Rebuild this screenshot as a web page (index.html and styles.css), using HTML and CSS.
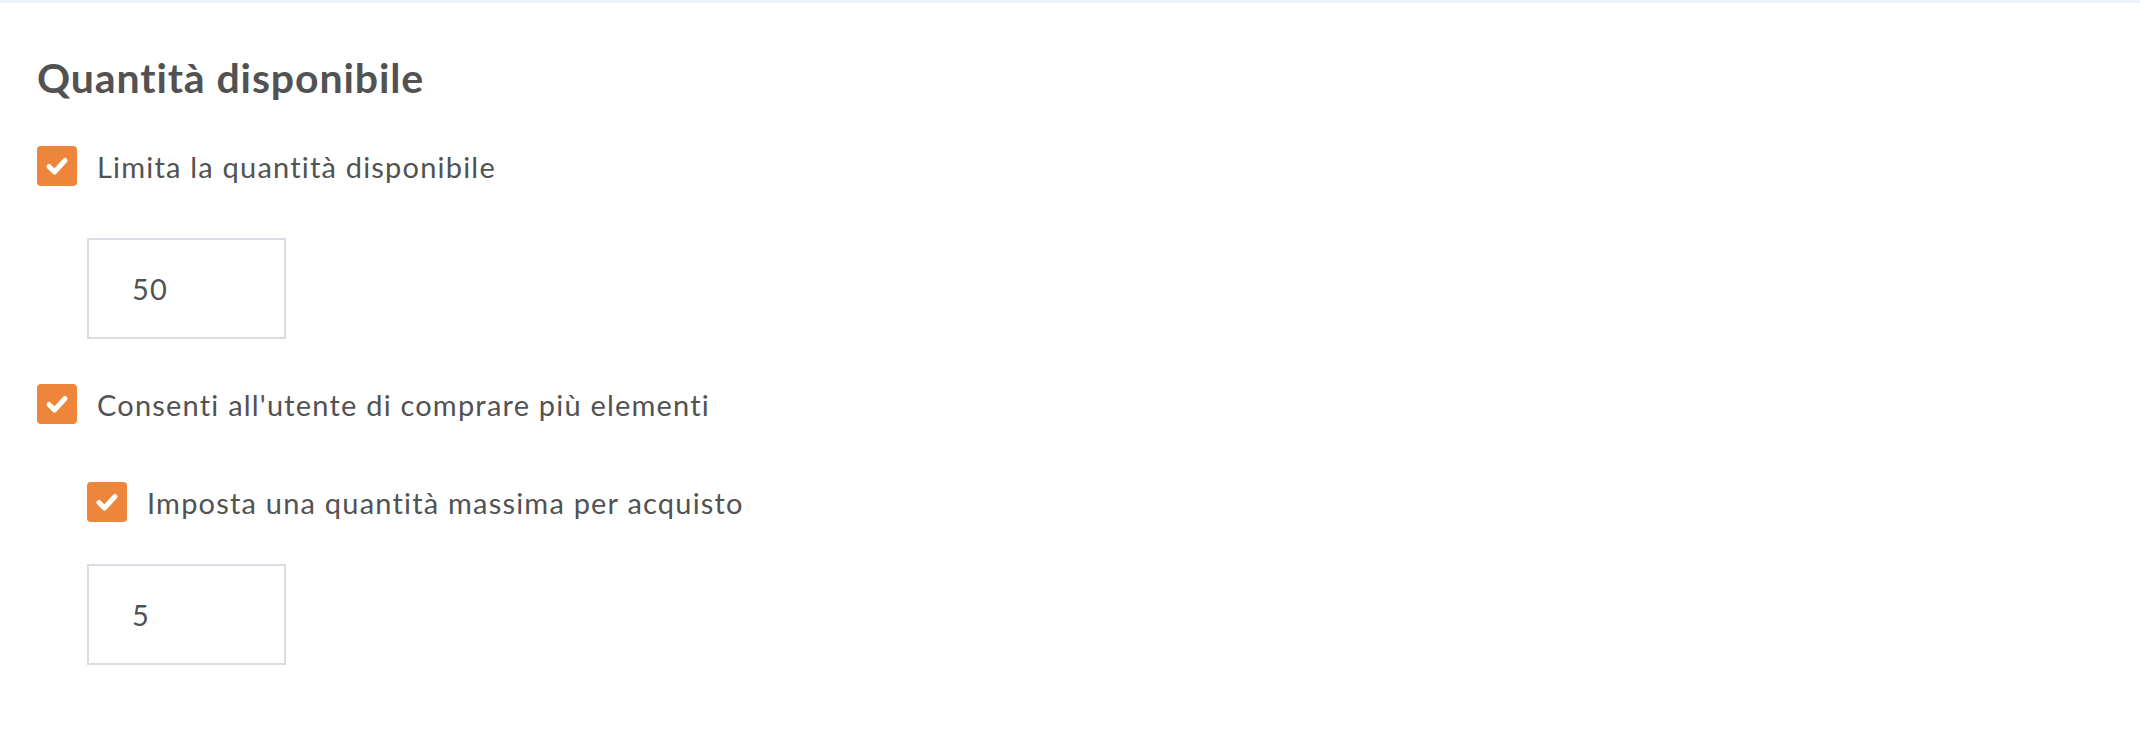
FILE: index.html
```html
<html>
	<head>
		<title>Quantità disponibile</title>
		<link rel="stylesheet" href="styles.css">
	</head>
	<body>
		<div class="topBar"></div>
		<div class="section">
			<h2 class="sectionTitle">Quantità disponibile</h2>

			<label class="checkRow">
				<span class="checkBox"><svg viewBox="0 0 40 40"><polyline points="12,20.5 17.5,26 28,14.5"/></svg></span>
				<span class="checkText">Limita la quantità disponibile</span>
			</label>
			<div class="indent">
				<input type="text" class="qtyInput" value="50">
			</div>

			<label class="checkRow rowSecond">
				<span class="checkBox"><svg viewBox="0 0 40 40"><polyline points="12,20.5 17.5,26 28,14.5"/></svg></span>
				<span class="checkText">Consenti all'utente di comprare più elementi</span>
			</label>
			<div class="indent">
				<label class="checkRow rowNested">
					<span class="checkBox"><svg viewBox="0 0 40 40"><polyline points="12,20.5 17.5,26 28,14.5"/></svg></span>
					<span class="checkText">Imposta una quantità massima per acquisto</span>
				</label>
				<input type="text" class="qtyInput qtySecond" value="5">
			</div>
		</div>
	</body>
</html>
```

FILE: styles.css
```css
body{
	margin:0px;
	background-color:#ffffff;
	font-family:Lato, "Liberation Sans", sans-serif;
	font-variant-ligatures:none;
	color:#505050;
}
.topBar{
	height:3px;
	background-color:#edf1fa;
}
.section{
	padding:0px 37px;
}
.sectionTitle{
	margin:0px;
	padding-top:51px;
	font-size:41px;
	line-height:48px;
	font-weight:700;
	letter-spacing:0.9px;
	color:#525252;
}
.checkRow{
	display:flex;
	align-items:center;
	gap:20px;
	height:40px;
	margin-top:44px;
	cursor:pointer;
}
.checkBox{
	width:40px;
	height:40px;
	flex-shrink:0;
	border-radius:4px;
	background-color:#ef853a;
	display:flex;
}
.checkBox svg{
	width:40px;
	height:40px;
}
.checkBox polyline{
	fill:none;
	stroke:#ffffff;
	stroke-width:5;
	stroke-linecap:round;
	stroke-linejoin:round;
}
.checkText{
	font-size:29px;
	letter-spacing:1.2px;
	color:#525252;
}
.indent{
	padding-left:50px;
}
.qtyInput{
	display:block;
	box-sizing:border-box;
	width:199px;
	height:101px;
	margin-top:52px;
	padding:0px 0px 0px 43px;
	border:2px solid #d8dce3;
	border-radius:0px;
	font-family:Lato, "Liberation Sans", sans-serif;
	font-size:29px;
	letter-spacing:1.2px;
	color:#525252;
	outline:none;
}
.rowSecond{
	margin-top:45px;
}
.rowNested{
	margin-top:58px;
}
.qtySecond{
	margin-top:42px;
}
```
